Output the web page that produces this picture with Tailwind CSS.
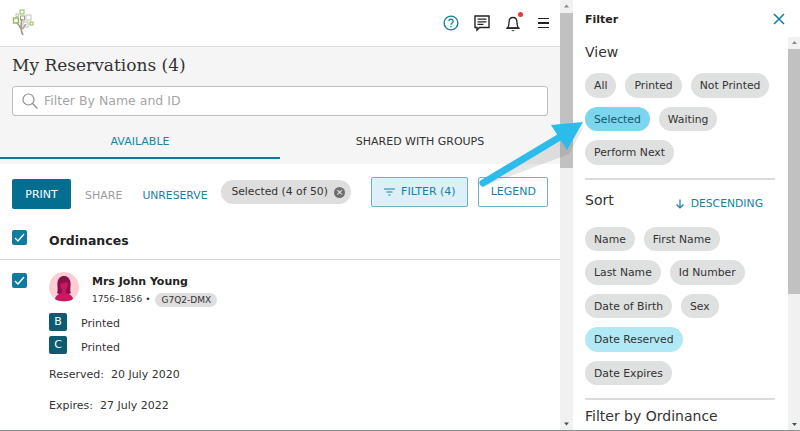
<!DOCTYPE html>
<html lang="en">
<head>
    <meta charset="UTF-8">
    <title>My Reservations</title>
    <script src="https://cdn.jsdelivr.net/npm/@tailwindcss/browser@4"></script>
</head>
<body class="w-[800px] h-[431px] overflow-hidden bg-white font-['DejaVu_Sans',sans-serif] text-[#333]">
<div class="relative flex h-[431px] border-b border-[#8a9299] overflow-hidden">

    <!-- main column -->
    <div class="w-[560px] h-[430px] shrink-0 flex flex-col">
        <header class="h-[47px] shrink-0 border-b border-[#ddd] pl-[12px] pr-[11px] flex items-center">
            <svg width="22" height="27" viewBox="0 0 22 27" class="mb-[2px]">
                <path d="M11 26 C8 21 9 16 10 10 M9 20 C8 17 6 15 5 14 M10 20 C12 18 13 16 14 15" fill="none" stroke="#a39a8b" stroke-width="1.6"/>
                <rect x="8" y="1" width="4" height="4" fill="none" stroke="#8cc04b" stroke-width="1"/>
                <rect x="1.5" y="9" width="5" height="5" fill="none" stroke="#8cc04b" stroke-width="1.4"/>
                <rect x="4" y="5" width="2.5" height="2.5" fill="none" stroke="#b5b0a6" stroke-width="0.8"/>
                <rect x="8.5" y="7" width="4" height="4" fill="none" stroke="#a39a8b" stroke-width="1"/>
                <rect x="14" y="6" width="5" height="5" fill="none" stroke="#c4c0b8" stroke-width="1"/>
                <rect x="11" y="13" width="5" height="5" fill="none" stroke="#c4c0b8" stroke-width="1"/>
                <rect x="18" y="13" width="3" height="3" fill="none" stroke="#8cc04b" stroke-width="1"/>
            </svg>
            <div class="ml-auto flex items-center gap-[14px]">
                <svg width="16" height="16" viewBox="0 0 16 16" class="mr-[1px]"><circle cx="8" cy="8" r="6.9" fill="none" stroke="#0f7ea3" stroke-width="1.4"/><path d="M5.9 6.2a2.1 2.1 0 1 1 3.2 1.8c-.8.5-1.1.9-1.1 1.7" fill="none" stroke="#0f7ea3" stroke-width="1.3"/><circle cx="8" cy="11.8" r=".8" fill="#0f7ea3"/></svg>
                <svg width="16" height="17" viewBox="0 0 16 17"><path d="M1 1h14v11.5H5.500L3 15v-2.500H1z" fill="none" stroke="#222" stroke-width="1.400"/><path d="M3.500 4.200h9M3.500 6.800h9M3.500 9.400h6" stroke="#222" stroke-width="1.200"/></svg>
                <span class="relative block w-[16px] h-[19px] ml-[1px]">
                    <svg width="16" height="19" viewBox="0 0 16 19" class="absolute left-0 top-0"><path d="M2.500 14c1.300-1.500 1.500-3 1.500-5.500C4 5.500 5.700 3.500 8 3.500s4 2 4 5c0 2.500.2 4 1.500 5.500z" fill="none" stroke="#222" stroke-width="1.300"/><path d="M1.500 14.200h13" stroke="#222" stroke-width="1.300"/><path d="M6.300 16.300a2 2 0 0 0 3.400 0z" fill="#222"/></svg>
                    <span class="absolute right-[-2px] top-[-2px] w-[5px] h-[5px] rounded-full bg-[#e8383d]"></span>
                </span>
                <span class="flex flex-col gap-[3px] w-[11px] ml-[3px]">
                    <span class="h-[1.500px] bg-[#222]"></span><span class="h-[1.500px] bg-[#222]"></span><span class="h-[1.500px] bg-[#222]"></span>
                </span>
            </div>
        </header>

        <section class="h-[117px] shrink-0 bg-[#f5f5f5] flex flex-col">
            <h1 class="px-[12px] pt-[6px] h-[39px] font-['DejaVu_Serif',serif] text-[17px] leading-[25px] text-[#333]">My Reservations (4)</h1>
            <div class="mx-[12px] w-[536px] h-[30px] bg-white border border-[#bdbdbd] rounded-[3px] flex items-center pl-[9px]">
                <svg width="16" height="16" viewBox="0 0 16 16"><circle cx="6.500" cy="6.500" r="5.500" fill="none" stroke="#8f8f8f" stroke-width="1.200"/><path d="M10.500 10.500l5 5" stroke="#8f8f8f" stroke-width="1.200"/></svg>
                <span class="ml-[6px] text-[12.500px] text-[#a5a5a5]">Filter By Name and ID</span>
            </div>
            <div class="flex mt-[14px] text-[11px] h-[29px]">
                <div class="w-[280px] h-[29px] border-b-2 border-[#0a7a9c] text-center text-[#1a86a8] leading-[24px]">AVAILABLE</div>
                <div class="w-[280px] text-center text-[#333] leading-[24px]">SHARED WITH GROUPS</div>
            </div>
        </section>

        <section class="h-[96px] shrink-0 border-b border-[#d4d4d4] pl-[12px]">
            <div class="flex items-start h-[65px] pt-[13px]">
                <button class="mt-[2px] w-[59px] h-[30px] pt-[2px] bg-[#036e8f] rounded-[2px] text-white text-[11px]">PRINT</button>
                <span class="mt-[2px] ml-[14px] leading-[34px] text-[11px] text-[#9c9c9c]">SHARE</span>
                <span class="mt-[2px] ml-[20px] w-[65px] whitespace-nowrap leading-[33px] text-[10.800px] text-[#1a7fa3]">UNRESERVE</span>
                <span class="mt-[3px] ml-[14px] w-[130px] h-[24px] rounded-full bg-[#dedede] flex items-center pl-[10px] pt-[1px] text-[10.800px] text-[#333] whitespace-nowrap">Selected (4 of 50)
                    <span class="ml-[6px] w-[11px] h-[11px] rounded-full bg-[#6e6e6e] text-white flex items-center justify-center text-[9px] leading-none">×</span>
                </span>
                <button class="ml-[20px] w-[97px] h-[30px] bg-[#dcf0f7] border border-[#6fb2c8] rounded-[2px] text-[11px] text-[#1a7fa3] flex items-center justify-center gap-[6px]">
                    <svg width="11" height="8" viewBox="0 0 11 8"><path d="M0 1h11M2.500 4h6M4.500 7h2" stroke="#1a7fa3" stroke-width="1"/></svg>
                    FILTER (4)
                </button>
                <button class="ml-[10px] w-[70px] h-[30px] bg-white border border-[#6fb2c8] rounded-[2px] text-[11px] text-[#1a7fa3]">LEGEND</button>
            </div>
            <div class="flex items-center gap-[22px] h-[16px]">
                <span class="w-[15px] h-[15px] bg-[#0f7c9f] rounded-[2px] flex items-center justify-center"><svg width="11" height="9" viewBox="0 0 11 9"><path d="M1 5l3 3 6-7" fill="none" stroke="#fff" stroke-width="1.300"/></svg></span>
                <span class="text-[12.500px] font-bold text-[#222] mt-[8px]">Ordinances</span>
            </div>
        </section>

        <section class="pl-[12px]">
            <div class="flex items-start pt-[13px] gap-[22px]">
                <span class="w-[15px] h-[15px] bg-[#0f7c9f] rounded-[2px] flex items-center justify-center"><svg width="11" height="9" viewBox="0 0 11 9"><path d="M1 5l3 3 6-7" fill="none" stroke="#fff" stroke-width="1.300"/></svg></span>
                <div>
                    <div class="flex items-start">
                        <svg width="30" height="30" viewBox="0 0 30 30" class="-mt-[1px]"><circle cx="15" cy="15" r="15" fill="#fccdd2"/><path d="M8 21c1.500-2.500 0-7 .5-10.500C9 6.500 11.500 4 15 4s6 2.500 6.500 6.500C22 14 20.500 18.500 22 21c-3 2-11 2-14 0z" fill="#8b0f4d"/><path d="M11.500 11c2 .5 5 0 6.500-1.500 1 1.500 1 3.500.5 5.500-.5 2-2 3-3.500 3s-3-1-3.500-3c-.2-1.500-.2-3 0-4z" fill="#c9185f"/><path d="M13 17h4v4h-4z" fill="#c9185f"/><path d="M6 27c.5-3.500 4-5.500 7-6h4c3 .5 6.500 2.500 7 6-2.500 3-15.500 3-18 0z" fill="#c9185f"/></svg>
                        <div class="ml-[13px]">
                            <div class="text-[11px] leading-[17px] font-bold text-[#222]">Mrs John Young</div>
                            <div class="flex items-center text-[9px] text-[#333] mt-[3px]">1756–1856 • <span class="ml-[5px] px-[6px] h-[14px] leading-[14px] rounded-full bg-[#dedede]">G7Q2-DMX</span></div>
                        </div>
                    </div>
                </div>
            </div>
        </section>
    </div>

    <!-- outer scrollbar -->
    <div class="w-[13px] h-[430px] shrink-0 bg-[#f1f1f1] flex flex-col items-center text-[#8a8a8a]">
        <svg width="7" height="13" viewBox="0 0 7 13"><path d="M1 7.500h5L3.500 4.500z" fill="#8a8a8a"/></svg>
        <div class="w-[13px] h-[155px] bg-[#c1c1c1]"></div>
        <svg width="7" height="13" viewBox="0 0 7 13" class="mt-auto"><path d="M1 5.500h5L3.500 8.500z" fill="#505050"/></svg>
    </div>

    <!-- filter drawer -->
    <div class="w-[227px] h-[430px] shrink-0 flex flex-col">
        <div class="h-[37px] shrink-0 pl-[12px] pr-[15px] pt-[3px] flex items-center justify-between">
            <span class="text-[11px] font-bold text-[#222]">Filter</span>
            <svg width="12" height="12" viewBox="0 0 12 12" class="-mt-[3px]"><path d="M1 1l10 10M11 1L1 11" stroke="#0f7ea3" stroke-width="1.500"/></svg>
        </div>
        <div class="flex flex-1 min-h-0">
            <div class="w-[215px] pl-[12px] overflow-hidden">
                <h2 class="text-[14px] leading-[20px] h-[31px] mt-[5px]">View</h2>
                <div class="flex flex-wrap gap-x-[9px] gap-y-[9px] text-[10.800px] w-[190px]">
                    <span class="h-[24.500px] px-[9px] rounded-full bg-[#dfe0e0] leading-[25px]">All</span>
                    <span class="h-[24.500px] px-[9px] rounded-full bg-[#dfe0e0] leading-[25px]">Printed</span>
                    <span class="h-[24.500px] px-[9px] rounded-full bg-[#dfe0e0] leading-[25px]">Not Printed</span>
                    <span class="h-[24.500px] px-[9px] rounded-full bg-[#7cd6ee] leading-[25px] text-[#12566e]">Selected</span>
                    <span class="h-[24.500px] px-[9px] rounded-full bg-[#dfe0e0] leading-[25px]">Waiting</span>
                    <span class="h-[24.500px] px-[9px] rounded-full bg-[#dfe0e0] leading-[25px]">Perform Next</span>
                </div>
                <div class="w-[190px] border-t-2 border-[#dcdcdc] mt-[13px]"></div>
                <div class="w-[190px] flex justify-between items-center h-[47px] pr-[12px]">
                    <h2 class="text-[14px] -mt-[5px]">Sort</h2>
                    <span class="flex items-center gap-[6px] text-[10.800px] text-[#1a7fa3] mt-[2px]"><svg width="10" height="10" viewBox="0 0 10 10"><path d="M5 0.500v8.500M1.500 5.500L5 9l3.500-3.500" fill="none" stroke="#1a7fa3" stroke-width="1.200"/></svg>DESCENDING</span>
                </div>
                <div class="flex flex-wrap gap-x-[9px] gap-y-[9px] text-[10.800px] w-[190px]">
                    <span class="h-[24.500px] px-[9px] rounded-full bg-[#dfe0e0] leading-[25px]">Name</span>
                    <span class="h-[24.500px] px-[9px] rounded-full bg-[#dfe0e0] leading-[25px]">First Name</span>
                    <span class="h-[24.500px] px-[9px] rounded-full bg-[#dfe0e0] leading-[25px]">Last Name</span>
                    <span class="h-[24.500px] px-[9px] rounded-full bg-[#dfe0e0] leading-[25px]">Id Number</span>
                    <span class="h-[24.500px] px-[9px] rounded-full bg-[#dfe0e0] leading-[25px]">Date of Birth</span>
                    <span class="h-[24.500px] px-[9px] rounded-full bg-[#dfe0e0] leading-[25px]">Sex</span>
                    <span class="h-[24.500px] px-[9px] rounded-full bg-[#b1e8f5] leading-[25px]">Date Reserved</span>
                    <span class="h-[24.500px] px-[9px] rounded-full bg-[#dfe0e0] leading-[25px]">Date Expires</span>
                </div>
                <div class="w-[190px] border-t-2 border-[#dcdcdc] mt-[13px]"></div>
                <h2 class="text-[14px] leading-[20px] mt-[6px] whitespace-nowrap">Filter by Ordinance</h2>
            </div>
            <div class="w-[12px] bg-[#f1f1f1] flex flex-col items-center">
                <svg width="7" height="12" viewBox="0 0 7 12"><path d="M1 7h5L3.500 4z" fill="#8a8a8a"/></svg>
                <div class="w-[12px] h-[245px] bg-[#c1c1c1]"></div>
                <svg width="7" height="12" viewBox="0 0 7 12" class="mt-auto"><path d="M1 5h5L3.500 8z" fill="#505050"/></svg>
            </div>
        </div>
    </div>

    <!-- ordinance rows -->
    <div class="absolute left-[49px] top-[313px] text-[11px] text-[#333]">
        <div class="flex items-center h-[18px]"><span class="w-[18px] h-[18px] bg-[#0e5a70] text-white rounded-[2px] text-center leading-[18px]">B</span><span class="ml-[14px] mt-[5px]">Printed</span></div>
        <div class="flex items-center h-[18px] mt-[5px]"><span class="w-[18px] h-[18px] bg-[#0e5a70] text-white rounded-[2px] text-center leading-[18px]">C</span><span class="ml-[14px] mt-[7px]">Printed</span></div>
        <div class="mt-[13px]">Reserved:&nbsp;&nbsp;20 July 2020</div>
        <div class="mt-[14px]">Expires:&nbsp;&nbsp;27 July 2022</div>
    </div>

    <!-- callout arrow -->
    <svg class="absolute left-0 top-0 pointer-events-none" width="800" height="431" viewBox="0 0 800 431">
        <path d="M483 184L560 139L583 124L568 152z" fill="#555" fill-opacity=".15" transform="translate(1 2)"/>
        <path d="M483 183L560 137" stroke="#2cbcec" stroke-width="7" stroke-linecap="round"/>
        <path d="M583 122L551 125L567 150z" fill="#2cbcec"/>
    </svg>
</div>
</body>
</html>
